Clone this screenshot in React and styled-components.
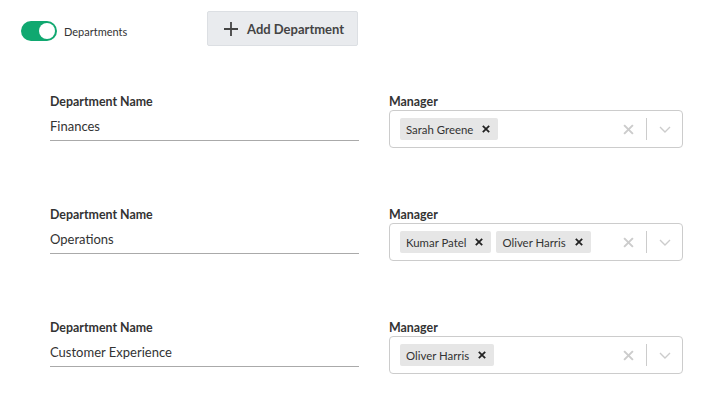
import React from 'react';
import styled, { createGlobalStyle } from 'styled-components';

const GlobalStyle = createGlobalStyle`
  body {
    margin: 0;
    background: #ffffff;
    font-family: Lato, "Liberation Sans", sans-serif;
    color: #333;
  }
`;

const Page = styled.div`
  padding: 11px 0 0 21px;
  width: 705px;
  box-sizing: border-box;
`;

const Header = styled.div`
  display: flex;
  align-items: flex-start;
`;

const ToggleWrap = styled.label`
  display: flex;
  align-items: center;
  gap: 7px;
  margin-top: 10px;
  width: 186px;
  font-size: 11px;
  color: #333;
`;

const Track = styled.span`
  width: 36px;
  height: 20px;
  border-radius: 10px;
  background: ${p => (p.on ? '#10a870' : '#ccc')};
  display: flex;
  align-items: center;
  justify-content: ${p => (p.on ? 'flex-end' : 'flex-start')};
  padding: 0 2px;
  box-sizing: border-box;
`;

const Knob = styled.span`
  width: 16px;
  height: 16px;
  border-radius: 50%;
  background: #fff;
`;

const AddButton = styled.button`
  display: flex;
  align-items: center;
  gap: 8px;
  height: 35px;
  width: 151px;
  padding: 0 0 0 15px;
  background: #e9ebee;
  border: 1px solid #dcdfe3;
  border-radius: 2px;
  font-family: inherit;
  font-weight: 700;
  font-size: 13px;
  color: #444;
`;

const Rows = styled.div`
  margin: 48px 0 0 29px;
  display: flex;
  flex-direction: column;
  gap: 59px;
`;

const Row = styled.div`
  display: grid;
  grid-template-columns: 309px 294px;
  column-gap: 30px;
`;

const Field = styled.div`
  display: flex;
  flex-direction: column;
`;

const Label = styled.div`
  font-size: 12.4px;
  line-height: 16px;
  font-weight: 700;
  color: #333;
  margin-bottom: ${p => p.gap}px;
`;

const TextInput = styled.div`
  height: 27px;
  box-sizing: border-box;
  padding-top: 3px;
  line-height: 18px;
  font-size: 13px;
  color: #333;
  border-bottom: 1px solid #aaa;
`;

const Select = styled.div`
  height: 38px;
  box-sizing: border-box;
  border: 1px solid #ccc;
  border-radius: 4px;
  display: flex;
  align-items: center;
  padding-left: 10px;
`;

const Tags = styled.div`
  flex: 1;
  display: flex;
  gap: 5px;
`;

const Tag = styled.div`
  height: 22px;
  display: flex;
  align-items: center;
  gap: 9px;
  padding: 0 8px 0 6px;
  background: #e6e6e6;
  border-radius: 2px;
  font-size: 11.4px;
  color: #333;
`;

const Controls = styled.div`
  display: flex;
  align-items: center;
  padding-right: 10px;
`;

const Sep = styled.span`
  width: 1px;
  height: 22px;
  background: #ccc;
  margin: 0 11px 0 12px;
`;

const XIcon = ({ size = 8, color = '#222', width = 2.2 }) => (
  <svg width={size} height={size} viewBox="0 0 10 10">
    <path d="M1 1 L9 9 M9 1 L1 9" stroke={color} strokeWidth={width} strokeLinecap="butt" />
  </svg>
);

const Chevron = () => (
  <svg width="14" height="14" viewBox="0 0 14 14">
    <path d="M2 5 L7 10 L12 5" fill="none" stroke="#ccc" strokeWidth="1.4" />
  </svg>
);

const Plus = () => (
  <svg width="16" height="16" viewBox="0 0 16 16">
    <path d="M8 1 V15 M1 8 H15" stroke="#444" strokeWidth="1.8" />
  </svg>
);

const departments = [
  { name: 'Finances', managers: ['Sarah Greene'] },
  { name: 'Operations', managers: ['Kumar Patel', 'Oliver Harris'] },
  { name: 'Customer Experience', managers: ['Oliver Harris'] },
];

export default function App() {
  return (
    <Page>
      <GlobalStyle />
      <Header>
        <ToggleWrap>
          <Track on>
            <Knob />
          </Track>
          Departments
        </ToggleWrap>
        <AddButton>
          <Plus />
          Add Department
        </AddButton>
      </Header>
      <Rows>
        {departments.map(d => (
          <Row key={d.name}>
            <Field>
              <Label gap={4}>Department Name</Label>
              <TextInput>{d.name}</TextInput>
            </Field>
            <Field>
              <Label gap={0}>Manager</Label>
              <Select>
                <Tags>
                  {d.managers.map(m => (
                    <Tag key={m}>
                      {m}
                      <XIcon />
                    </Tag>
                  ))}
                </Tags>
                <Controls>
                  <XIcon size={11} color="#ccc" width={1.8} />
                  <Sep />
                  <Chevron />
                </Controls>
              </Select>
            </Field>
          </Row>
        ))}
      </Rows>
    </Page>
  );
}
